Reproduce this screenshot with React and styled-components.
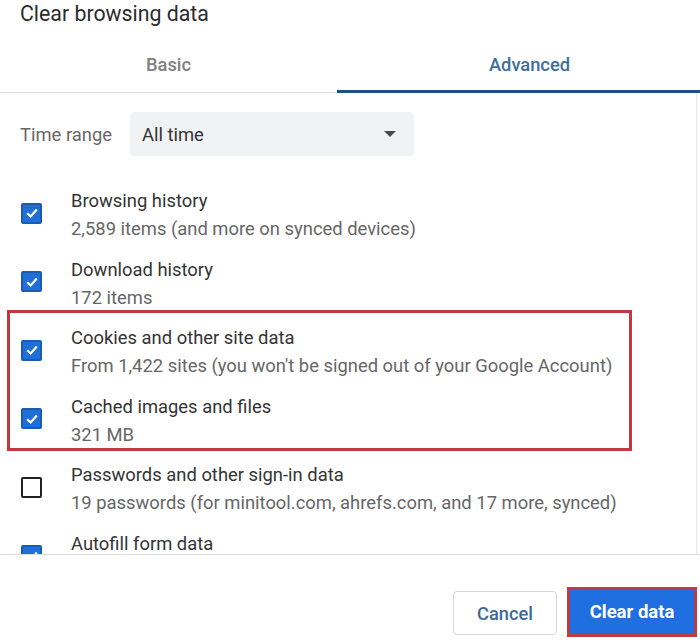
import styled, { createGlobalStyle } from "styled-components"

const GlobalStyle = createGlobalStyle`
    body {
        margin: 0;
        background: #ffffff;
        font-family: Roboto, "Noto Sans", sans-serif;
    }
`

const items = [
    { title: "Browsing history", sub: "2,589 items (and more on synced devices)", checked: true },
    { title: "Download history", sub: "172 items", checked: true },
    { title: "Cookies and other site data", sub: "From 1,422 sites (you won't be signed out of your Google Account)", checked: true, marked: true },
    { title: "Cached images and files", sub: "321 MB", checked: true, marked: true },
    { title: "Passwords and other sign-in data", sub: "19 passwords (for minitool.com, ahrefs.com, and 17 more, synced)", checked: false },
    { title: "Autofill form data", sub: "", checked: true },
]

function Check({ checked }) {
    return (
        <Box $checked={checked}>
            {checked && (
                <svg width="14" height="14" viewBox="0 0 14 14">
                    <path d="M2.2 7.2 L5.6 10.4 L11.8 3.6" fill="none" stroke="#fff" strokeWidth="2.2" />
                </svg>
            )}
        </Box>
    )
}

function Row({ item }) {
    return (
        <Item>
            <Check checked={item.checked} />
            <Texts>
                <Title>{item.title}</Title>
                {item.sub && <Sub>{item.sub}</Sub>}
            </Texts>
        </Item>
    )
}

export default function App() {
    const before = items.slice(0, 2)
    const marked = items.filter((i) => i.marked)
    const after = items.slice(4)
    return (
        <>
            <GlobalStyle />
            <Dialog>
                <Heading>Clear browsing data</Heading>
                <TabBar>
                    <Tab>Basic</Tab>
                    <Tab $active>Advanced</Tab>
                </TabBar>
                <Body>
                    <TimeRow>
                        <TimeLabel>Time range</TimeLabel>
                        <Select>
                            All time
                            <Arrow />
                        </Select>
                    </TimeRow>
                    <List>
                        {before.map((item) => <Row key={item.title} item={item} />)}
                        <Highlight>
                            {marked.map((item) => <Row key={item.title} item={item} />)}
                        </Highlight>
                        {after.map((item) => <Row key={item.title} item={item} />)}
                    </List>
                </Body>
                <Footer>
                    <Cancel>Cancel</Cancel>
                    <ClearButton>Clear data</ClearButton>
                </Footer>
            </Dialog>
        </>
    )
}

const Dialog = styled.div`
    width: 700px;
    height: 642px;
    display: flex;
    flex-direction: column;
    overflow: hidden;
`
const Heading = styled.div`
    height: 28px;
    line-height: 28px;
    padding-left: 20px;
    font-size: 21.3px;
    color: #2b2b2b;
`
const TabBar = styled.div`
    display: grid;
    grid-template-columns: 337px 1fr;
    border-bottom: 1px solid #dcdcdc;
`
const Tab = styled.div`
    height: 65px;
    box-sizing: border-box;
    padding-top: 26px;
    padding-left: ${(p) => (p.$active ? "22px" : "0")};
    line-height: 22px;
    text-align: center;
    font-size: 18.3px;
    font-weight: 500;
    color: ${(p) => (p.$active ? "#3d6e9c" : "#808080")};
    border-bottom: 3px solid ${(p) => (p.$active ? "#1f4e8c" : "transparent")};
    margin-bottom: -1px;
`
const Body = styled.div`
    flex: 0 0 461px;
    width: 697px;
    border-right: 1px solid #e6e6e6;
    overflow: hidden;
    padding-top: 19px;
    box-sizing: border-box;
`
const TimeRow = styled.div`
    display: flex;
    align-items: center;
    padding-left: 20px;
`
const TimeLabel = styled.div`
    width: 110px;
    font-size: 18.4px;
    color: #666666;
`
const Select = styled.div`
    width: 284px;
    height: 44px;
    box-sizing: border-box;
    padding: 0 12px;
    display: flex;
    align-items: center;
    justify-content: space-between;
    background: #f1f2f4;
    border-radius: 4px;
    font-size: 18.4px;
    color: #333333;
`
const Arrow = styled.span`
    width: 0;
    height: 0;
    margin-right: 6px;
    border-left: 6px solid transparent;
    border-right: 6px solid transparent;
    border-top: 6px solid #4a4a4a;
`
const List = styled.div`
    margin-top: 23px;
`
const Highlight = styled.div`
    position: relative;

    &::after {
        content: "";
        position: absolute;
        left: 7px;
        top: -6px;
        width: 625px;
        bottom: 2px;
        box-sizing: border-box;
        border: 3px solid #bf3a40;
        pointer-events: none;
    }
`
const Item = styled.div`
    display: flex;
    align-items: flex-start;
    padding: 8px 0 4.5px 21px;
    gap: 29px;
    min-height: 56px;
`
const Box = styled.div`
    width: 21px;
    height: 21px;
    flex: 0 0 21px;
    margin-top: 15.5px;
    box-sizing: border-box;
    border-radius: 2px;
    display: flex;
    align-items: center;
    justify-content: center;
    background: ${(p) => (p.$checked ? "#1f6fd6" : "#ffffff")};
    border: 2px solid ${(p) => (p.$checked ? "#1a5cb4" : "#222222")};
`
const Texts = styled.div`
    display: flex;
    flex-direction: column;
`
const Title = styled.div`
    line-height: 28px;
    font-size: 18.4px;
    color: #333333;
`
const Sub = styled.div`
    line-height: 28px;
    font-size: 18.4px;
    color: #666666;
`
const Footer = styled.div`
    flex: 1;
    display: flex;
    justify-content: flex-end;
    align-items: flex-start;
    gap: 10px;
    padding-right: 3px;
    border-top: 1px solid #dcdcdc;
`
const Cancel = styled.button`
    margin-top: 36px;
    width: 104px;
    height: 44px;
    background: #ffffff;
    border: 1px solid #d4d4d4;
    border-radius: 4px;
    font-family: Roboto, sans-serif;
    font-size: 18.3px;
    font-weight: 500;
    color: #3d6a94;
`
const ClearButton = styled.button`
    margin-top: 32px;
    width: 130px;
    height: 50px;
    box-sizing: border-box;
    background: #1f6fe0;
    border: 3px solid #bd3b44;
    font-family: Roboto, sans-serif;
    font-size: 18.5px;
    font-weight: 700;
    color: #ffffff;
`
